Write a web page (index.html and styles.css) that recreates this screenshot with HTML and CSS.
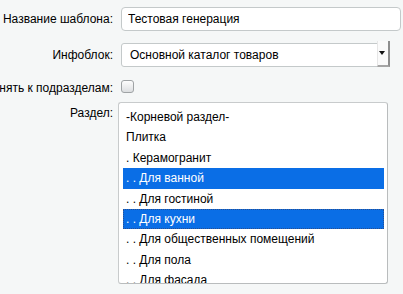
FILE: index.html
```html
<!DOCTYPE html>
<html lang="ru">
<head>
    <meta charset="UTF-8">
    <meta name="viewport" content="width=device-width, initial-scale=1.0">
    <title>Шаблон генерации</title>
    <link rel="stylesheet" href="styles.css">
</head>
<body>

    <!-- Template settings form -->
    <div class="form">
        <div class="row row-name">
            <div class="label">Название шаблона:</div>
            <div class="field">
                <input type="text" class="text-input" value="Тестовая генерация">
            </div>
        </div>

        <div class="row row-iblock">
            <div class="label">Инфоблок:</div>
            <div class="field">
                <div class="select">
                    <span class="select-value">Основной каталог товаров</span>
                    <span class="select-btn"><span class="arrow"></span></span>
                </div>
            </div>
        </div>

        <div class="row row-sub">
            <div class="label">Применять к подразделам:</div>
            <div class="field">
                <span class="checkbox"></span>
            </div>
        </div>

        <div class="row row-section">
            <div class="label label-top">Раздел:</div>
            <div class="field">
                <div class="listbox">
                    <div class="option">-Корневой раздел-</div>
                    <div class="option">Плитка</div>
                    <div class="option">. Керамогранит</div>
                    <div class="option selected">. . Для ванной</div>
                    <div class="option">. . Для гостиной</div>
                    <div class="option selected focused">. . Для кухни</div>
                    <div class="option">. . Для общественных помещений</div>
                    <div class="option">. . Для пола</div>
                    <div class="option">. . Для фасада</div>
                    <div class="option">. . Для стен</div>
                </div>
            </div>
        </div>
    </div>

</body>
</html>
```

FILE: styles.css
```css
body {
    font-family: "Liberation Sans", Arial, sans-serif;
    font-size: 12px;
    color: #000;
    margin: 0;
    padding: 0;
    background-color: #f5f7f7;
    overflow: hidden;
}

.form {
    padding-top: 7px;
}

/* Rows: label column + field column */
.row {
    display: flex;
    align-items: center;
}

.row-name, .row-iblock {
    height: 24px;
    margin-bottom: 12px;
}

.row-sub {
    height: 14px;
    margin-bottom: 9px;
}

.row-section {
    align-items: flex-start;
}

.label {
    width: 113px;
    flex-shrink: 0;
    display: flex;
    justify-content: flex-end;
    white-space: nowrap;
    margin-right: 8px;
    line-height: 15px;
}

.row-sub .label {
    position: relative;
    top: 2px;
}

.label-top {
    padding-top: 4px;
}

.field {
    display: flex;
    align-items: center;
}

/* Text input */
.text-input {
    box-sizing: border-box;
    width: 280px;
    height: 24px;
    padding: 0 6px;
    font-family: inherit;
    font-size: 12px;
    color: #000;
    background: #fff;
    border: 1px solid #c4c9ca;
    border-radius: 4px;
    outline: none;
}

/* Dropdown */
.select {
    box-sizing: border-box;
    width: 268px;
    height: 24px;
    display: flex;
    align-items: center;
    background: #fff;
    border: 1px solid #c4c9ca;
    border-radius: 3px;
}

.select-value {
    flex: 1;
    padding-left: 8px;
}

.select-btn {
    box-sizing: border-box;
    width: 13px;
    height: 26px;
    margin-right: -2px;
    margin-top: -3px;
    border-left: 1px solid #e6e6e6;
    border-right: 2px solid #8e8e8e;
    border-bottom: 2px solid #a5a5a5;
    background: #fafafa;
    display: flex;
    align-items: center;
    justify-content: center;
}

.arrow {
    width: 0;
    height: 0;
    border-left: 3px solid transparent;
    border-right: 3px solid transparent;
    border-top: 4px solid #111;
    margin-left: -2px;
}

/* Checkbox */
.checkbox {
    box-sizing: border-box;
    width: 13px;
    height: 13px;
    border: 1px solid #9fa3a5;
    border-radius: 3px;
    background: linear-gradient(#fdfdfd, #dcdee0);
}

/* Listbox */
.listbox {
    box-sizing: border-box;
    width: 270px;
    height: 182px;
    margin-left: -3px;
    padding: 4px 3px 0 4px;
    background: #fff;
    border: 1px solid #c8cbcc;
    border-right-color: #b9bcbd;
    border-bottom-color: #b9bcbd;
    border-radius: 3px;
    overflow: hidden;
}

.option {
    height: 20.4px;
    line-height: 20.4px;
    padding-left: 3px;
    white-space: nowrap;
}

.option.selected {
    background: #0a6ee6;
    color: #fff;
}

.option.focused {
    outline: 1px dotted #2a4f8f;
    outline-offset: -1px;
}
```
